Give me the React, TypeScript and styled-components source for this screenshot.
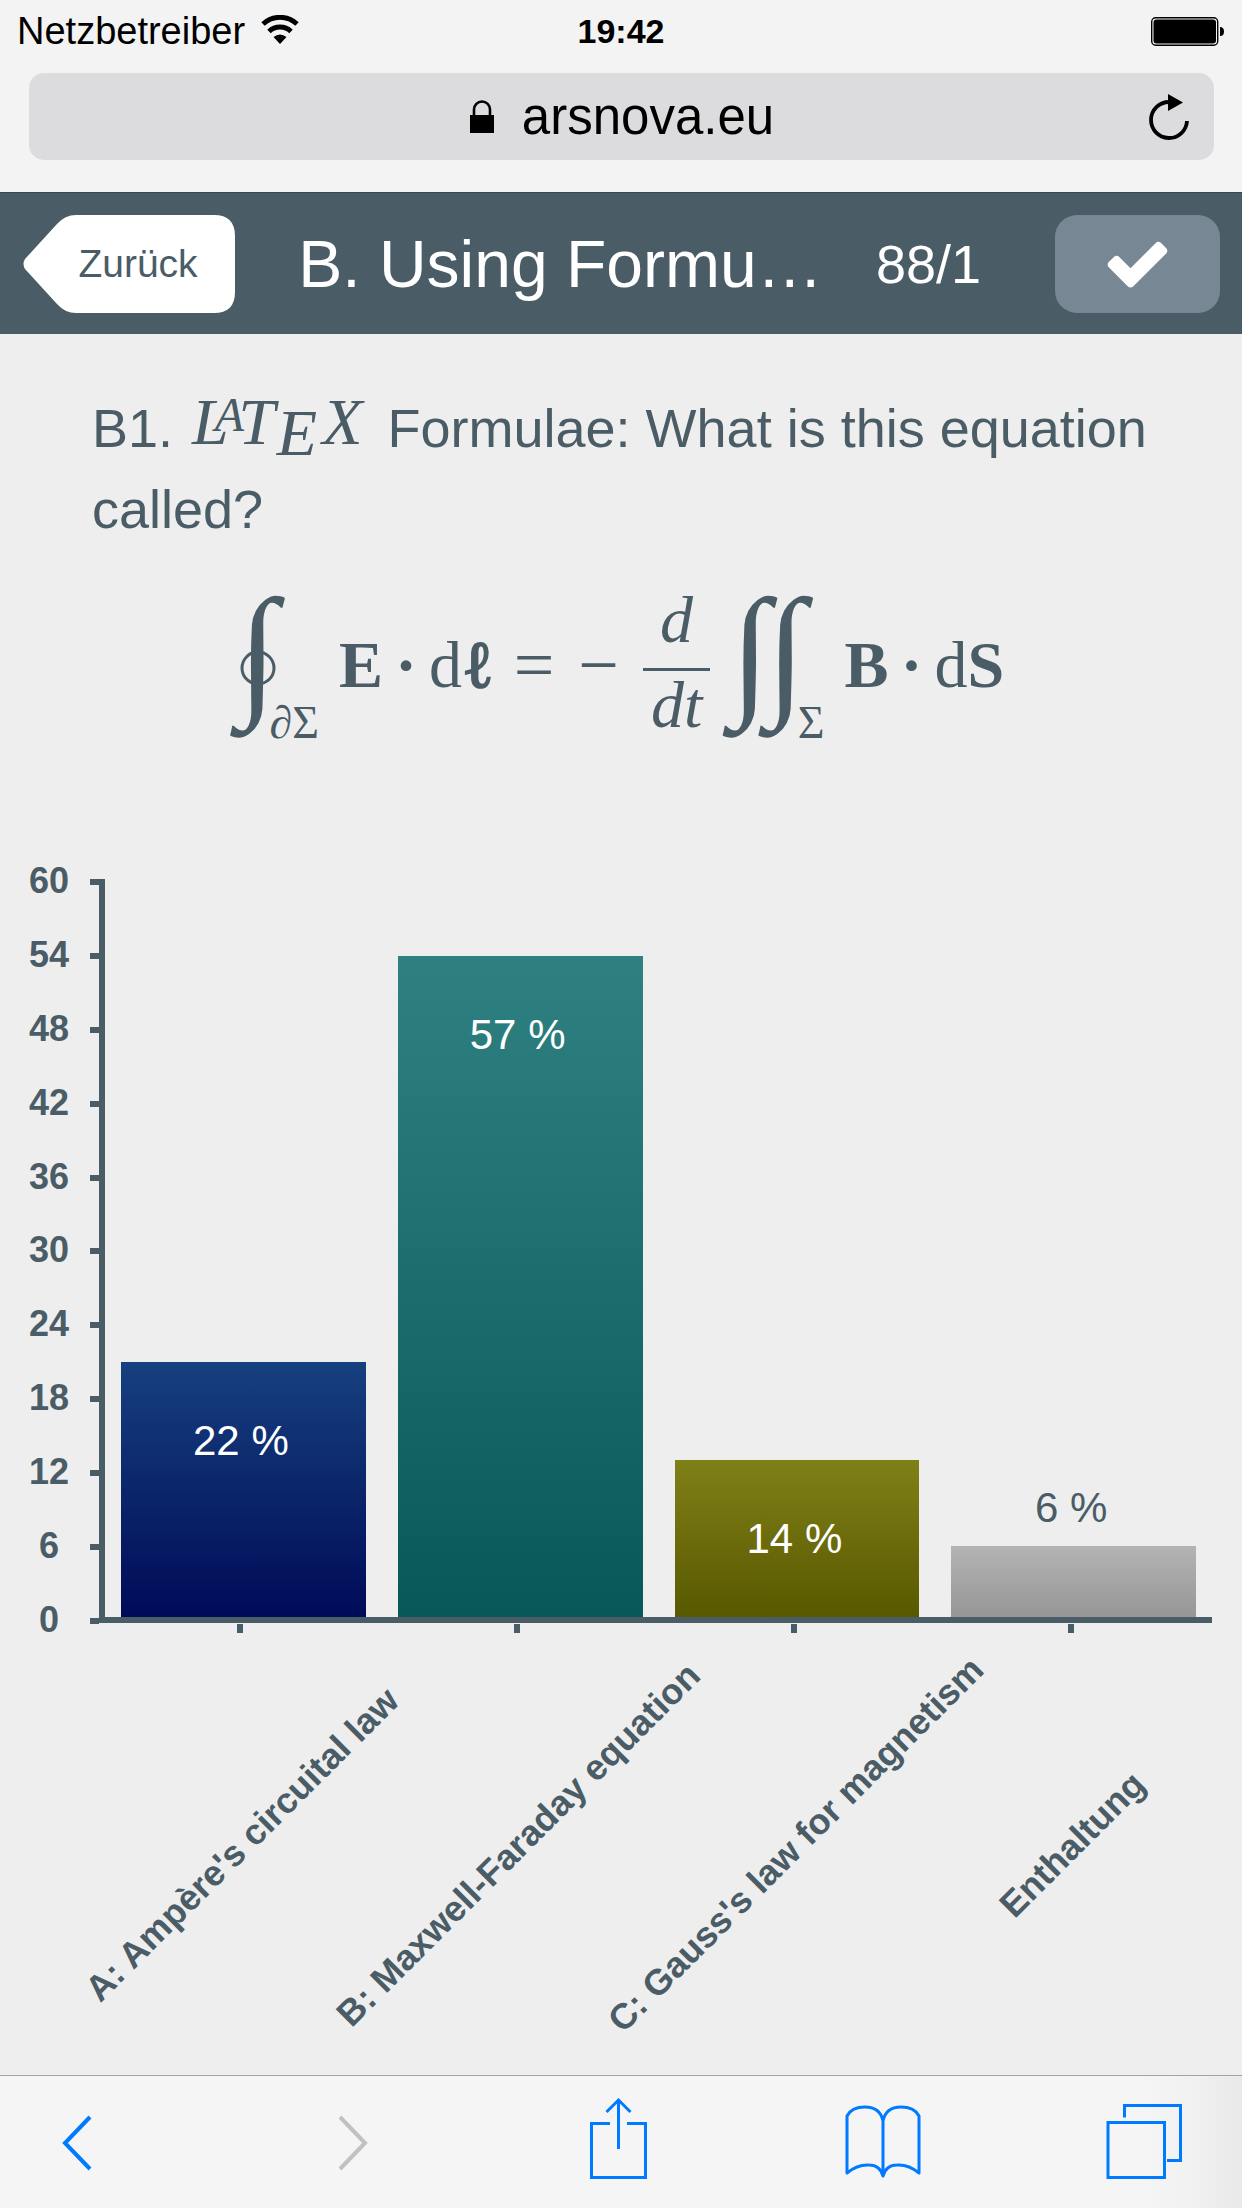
import React from "react";
import styled, { createGlobalStyle } from "styled-components";

const slate = "#4a5c66";
const blue = "#007aff";
const sans = '"Liberation Sans", Arial, sans-serif';
const serif = '"Liberation Serif", "Times New Roman", serif';

const GlobalStyle = createGlobalStyle`
  *, *::before, *::after { box-sizing: border-box; }
  body { margin: 0; background: #eeeeee; font-family: ${sans}; }
  button { border: 0; margin: 0; padding: 0; background: none; font-family: inherit; cursor: pointer; }
  svg { display: block; }
`;

const Page = styled.div`
  min-height: 100vh;
  display: flex;
  flex-direction: column;
  overflow-x: hidden;
`;

/* ---------- browser chrome ---------- */

const BrowserTop = styled.header`
  background: #f3f3f3;
  border-bottom: 1px solid #37474f;
  padding-bottom: 32px;
`;

const StatusBar = styled.div`
  display: grid;
  grid-template-columns: 1fr auto 1fr;
  align-items: center;
  height: 73px;
  padding: 0 17px 11px;
  color: #000;
`;

const Carrier = styled.div`
  display: flex;
  align-items: center;
  gap: 16px;
  font-size: 38px;
  line-height: 42px;
`;

const Clock = styled.time`
  font-size: 34px;
  line-height: 42px;
  font-weight: 700;
`;

const BatterySlot = styled.div`
  justify-self: end;
`;

const AddressBar = styled.div`
  display: grid;
  grid-template-columns: 1fr auto 1fr;
  align-items: center;
  height: 87px;
  margin: 0 28px 0 29px;
  padding: 0 25px;
  border-radius: 15px;
  background: #dcdcde;
`;

const Address = styled.a`
  grid-column: 2;
  display: flex;
  align-items: center;
  gap: 27px;
  color: #000;
  text-decoration: none;
  font-size: 51px;
  line-height: 60px;
`;

const ReloadButton = styled.button`
  justify-self: end;
`;

/* ---------- app header ---------- */

const AppBar = styled.div`
  display: flex;
  align-items: center;
  height: 141px;
  padding: 0 22px 0 23px;
  background: ${slate};
  color: #fff;
`;

const BackButton = styled.button`
  position: relative;
  width: 212px;
  height: 98px;
  padding-left: 18px;
  color: ${slate};
  font-size: 39px;
  line-height: 48px;

  svg {
    position: absolute;
    inset: 0;
  }
  span {
    position: relative;
  }
`;

const Title = styled.h1`
  flex: 1;
  min-width: 0;
  margin: 0;
  padding-left: 10px;
  overflow: hidden;
  text-overflow: ellipsis;
  white-space: nowrap;
  text-align: center;
  font-size: 66px;
  line-height: 80px;
  font-weight: 400;
`;

const Counter = styled.span`
  margin-right: 74px;
  font-size: 54px;
  line-height: 80px;
`;

const CheckButton = styled.button`
  display: flex;
  align-items: center;
  justify-content: center;
  width: 165px;
  height: 98px;
  border-radius: 22px;
  background: #778793;
`;

/* ---------- question ---------- */

const Main = styled.main`
  flex: 1;
  color: ${slate};
`;

const Question = styled.p`
  margin: 0;
  padding: 54px 92px 0;
  font-size: 54px;
  line-height: 81px;
`;

const Logo = styled.span`
  margin: 0 10px 0 4px;
  font-family: ${serif};
  font-style: italic;
  font-size: 66px;
  line-height: 0;
  vertical-align: 3px;
`;

const LogoLetter = styled.span<{ $small?: boolean; $rise?: number; $shift: number }>`
  font-size: ${(p) => (p.$small ? 48 : 66)}px;
  vertical-align: ${(p) => p.$rise ?? 0}px;
  margin-left: ${(p) => p.$shift}px;
`;

const Formula = styled.div`
  display: flex;
  align-items: center;
  justify-content: center;
  gap: 20px;
  height: 150px;
  margin: 43px 0 136px;
  font-family: ${serif};
  font-size: 66px;
  line-height: 66px;
`;

const Term = styled.span`
  padding-bottom: 6px;
`;

const Dot = styled(Term)`
  margin: 0 -8px;
  font-weight: 700;
`;

const Script = styled.span`
  -webkit-text-stroke: 2px ${slate};
`;

const Relation = styled(Term)`
  margin-right: 4px;
  font-size: 72px;
`;

const Integral = styled.span`
  display: flex;
  align-items: center;
  align-self: stretch;
`;

const IntegralSign = styled.span<{ $closed?: boolean }>`
  position: relative;
  padding-bottom: 36px;
  font-size: 145px;
  line-height: 126px;

  & + & {
    margin-left: -4px;
  }
  &::after {
    content: "";
    display: ${(p) => (p.$closed ? "block" : "none")};
    position: absolute;
    top: 50%;
    left: 50%;
    width: 35px;
    height: 35px;
    border: 3px solid ${slate};
    border-radius: 50%;
    transform: translate(-50%, -50%);
  }
`;

const Bound = styled.sub`
  align-self: flex-end;
  margin-left: -8px;
  font-size: 46px;
  line-height: 40px;
`;

const Fraction = styled.span`
  display: flex;
  flex-direction: column;
  padding-bottom: 11px;
  text-align: center;
  font-style: italic;
  line-height: 48px;
`;

const Numerator = styled.span`
  padding-bottom: 24px;
`;

const Denominator = styled.span`
  border-top: 3px solid ${slate};
  padding: 10px 8px 0;
`;

/* ---------- chart ---------- */

const Chart = styled.figure`
  display: grid;
  grid-template-columns: 70px 1fr;
  margin: 0;
  padding: 0 30px 0 29px;
`;

const Scale = styled.div`
  display: flex;
  flex-direction: column;
  justify-content: space-between;
  height: 745px;
`;

const ScaleMark = styled.div`
  display: flex;
  align-items: center;
  justify-content: space-between;
  height: 6px;
  font-size: 36px;
  line-height: 40px;
  font-weight: 700;

  span {
    width: 40px;
    padding-bottom: 2px;
    text-align: center;
  }
  &::after {
    content: "";
    width: 9px;
    height: 6px;
    background: ${slate};
  }
`;

const Plot = styled.div`
  display: grid;
  grid-template-columns: repeat(4, 1fr);
  align-items: end;
  gap: 32px;
  height: 744px;
  padding: 0 16px;
  border-left: 6px solid ${slate};
  border-bottom: 6px solid ${slate};
`;

const Bar = styled.div<{ $from: string; $to: string; $outside: boolean }>`
  display: flex;
  justify-content: center;
  padding-right: 5px;
  background: linear-gradient(${(p) => p.$from}, ${(p) => p.$to});
  color: ${(p) => (p.$outside ? slate : "#fff")};
  font-size: 42px;
  line-height: 48px;

  span {
    margin-top: ${(p) => (p.$outside ? -62 : 55)}px;
  }
`;

const Categories = styled.div`
  grid-column: 2;
  display: grid;
  grid-template-columns: repeat(4, 1fr);
  padding: 0 3px;
`;

const Category = styled.div`
  display: flex;
  flex-direction: column;
  align-items: center;
  height: 435px;
  min-width: 0;

  &::before {
    content: "";
    width: 6px;
    height: 9px;
    flex: none;
    background: ${slate};
  }
`;

const CategoryName = styled.span`
  margin: auto 0;
  padding-left: 4px;
  white-space: nowrap;
  transform: rotate(-45deg);
  font-size: 36px;
  line-height: 32px;
  font-weight: 700;
`;

/* ---------- browser toolbar ---------- */

const Toolbar = styled.nav`
  display: flex;
  align-items: flex-start;
  justify-content: space-between;
  height: 133px;
  padding: 21px 60px 0 61px;
  border-top: 1px solid #a2a4a3;
  background: linear-gradient(to right, #f5f5f5 92%, #f1f1f1 96%, #e9e9e9);
`;

const bars = [
  { name: "A: Ampère's circuital law", votes: 21, share: "22 %", from: "#16407f", to: "#000b57" },
  { name: "B: Maxwell-Faraday equation", votes: 54, share: "57 %", from: "#2f8181", to: "#095858" },
  { name: "C: Gauss's law for magnetism", votes: 13, share: "14 %", from: "#808018", to: "#585800" },
  { name: "Enthaltung", votes: 6, share: "6 %", from: "#b4b4b4", to: "#969696" },
];

const max = 60;
const marks = [60, 54, 48, 42, 36, 30, 24, 18, 12, 6, 0];

const WifiIcon = () => (
  <svg width="38" height="32" viewBox="0 0 38 32" aria-hidden="true">
    <path d="M2 9a25 25 0 0 1 34 0" fill="none" stroke="#000" strokeWidth="5" />
    <path d="M8 16.500a16 16 0 0 1 22 0" fill="none" stroke="#000" strokeWidth="5" />
    <path d="M19 29l-6.500-7q6.500-5 13 0z" fill="#000" />
  </svg>
);

const BatteryIcon = () => (
  <svg width="74" height="29" viewBox="0 0 74 29" role="img" aria-label="Akku">
    <rect x=".7" y=".7" width="66" height="27.600" rx="4" fill="none" stroke="#000" strokeWidth="1.400" />
    <rect x="2.500" y="2.500" width="62.500" height="24" rx="3" fill="#000" />
    <path d="M69 10q4 0 4 4.500t-4 4.500z" fill="#000" />
  </svg>
);

const LockIcon = () => (
  <svg width="26" height="34" viewBox="0 0 26 34" aria-hidden="true">
    <rect x="1" y="15" width="24" height="18" fill="#000" />
    <path d="M5 16V9.500a8 8 0 0 1 16 0V16" fill="none" stroke="#000" strokeWidth="2.600" />
  </svg>
);

const ReloadIcon = () => (
  <svg width="40" height="46" viewBox="0 0 40 46" aria-hidden="true">
    <path d="M20 8a18 18 0 1 0 18 19" fill="none" stroke="#000" strokeWidth="3.800" />
    <path d="M19 0l15 8.500-15 8.500z" fill="#000" />
  </svg>
);

const BackShape = () => (
  <svg width="212" height="98" viewBox="0 0 212 98" aria-hidden="true">
    <path
      d="M2 44L34 9Q42 0 53 0H191Q212 0 212 21V77Q212 98 191 98H53Q42 98 34 89L2 54Q-1 49 2 44Z"
      fill="#fff"
    />
  </svg>
);

const CheckIcon = () => (
  <svg width="69" height="69" viewBox="0 0 1792 1792" aria-hidden="true">
    <path
      fill="#fff"
      d="M1671 566q0 40-28 68l-724 724-136 136q-28 28-68 28t-68-28l-136-136-362-362q-28-28-28-68t28-68l136-136q28-28 68-28t68 28l294 295 656-657q28-28 68-28t68 28l136 136q28 28 28 68z"
    />
  </svg>
);

const ToolIcon = ({
  color = blue,
  weight = 3,
  children,
}: {
  color?: string;
  weight?: number;
  children: React.ReactNode;
}) => (
  <svg width="76" height="84" viewBox="0 0 76 84" fill="none" stroke={color} strokeWidth={weight} aria-hidden="true">
    {children}
  </svg>
);

export default function App() {
  return (
    <Page>
      <GlobalStyle />
      <BrowserTop>
        <StatusBar>
          <Carrier>
            Netzbetreiber
            <WifiIcon />
          </Carrier>
          <Clock>19:42</Clock>
          <BatterySlot>
            <BatteryIcon />
          </BatterySlot>
        </StatusBar>
        <AddressBar>
          <Address href="#">
            <LockIcon />
            arsnova.eu
          </Address>
          <ReloadButton type="button" aria-label="Neu laden">
            <ReloadIcon />
          </ReloadButton>
        </AddressBar>
      </BrowserTop>

      <AppBar>
        <BackButton type="button">
          <BackShape />
          <span>Zurück</span>
        </BackButton>
        <Title>B. Using Formu…</Title>
        <Counter>88/1</Counter>
        <CheckButton type="button" aria-label="Richtige Antwort zeigen">
          <CheckIcon />
        </CheckButton>
      </AppBar>

      <Main>
        <Question>
          B1.{" "}
          <Logo>
            L<LogoLetter $small $rise={13} $shift={-14}>A</LogoLetter>
            <LogoLetter $shift={-6}>T</LogoLetter>
            <LogoLetter $rise={-11} $shift={2}>E</LogoLetter>
            <LogoLetter $shift={5}>X</LogoLetter>
          </Logo>{" "}
          Formulae: What is this equation called?
        </Question>

        <Formula>
          <Integral>
            <IntegralSign $closed>∫</IntegralSign>
            <Bound>∂Σ</Bound>
          </Integral>
          <Term><b>E</b></Term>
          <Dot>·</Dot>
          <Term>d<Script>ℓ</Script></Term>
          <Relation>=</Relation>
          <Relation>−</Relation>
          <Fraction>
            <Numerator>d</Numerator>
            <Denominator>dt</Denominator>
          </Fraction>
          <Integral>
            <IntegralSign>∫</IntegralSign>
            <IntegralSign>∫</IntegralSign>
            <Bound>Σ</Bound>
          </Integral>
          <Term><b>B</b></Term>
          <Dot>·</Dot>
          <Term>d<b>S</b></Term>
        </Formula>

        <Chart>
          <Scale>
            {marks.map((m) => (
              <ScaleMark key={m}>
                <span>{m}</span>
              </ScaleMark>
            ))}
          </Scale>
          <Plot>
            {bars.map((b) => (
              <Bar
                key={b.name}
                $from={b.from}
                $to={b.to}
                $outside={b.votes < 10}
                style={{ height: `calc(${(b.votes / max) * 100}% - 3px)` }}
              >
                <span>{b.share}</span>
              </Bar>
            ))}
          </Plot>
          <Categories>
            {bars.map((b) => (
              <Category key={b.name}>
                <CategoryName>{b.name}</CategoryName>
              </Category>
            ))}
          </Categories>
        </Chart>
      </Main>

      <Toolbar>
        <button type="button" aria-label="Zurück">
          <ToolIcon weight={4}>
            <path d="M29 20L4 46l25 26" />
          </ToolIcon>
        </button>
        <button type="button" aria-label="Vorwärts">
          <ToolIcon weight={4} color="#c1c1c1">
            <path d="M18 20l25 26-25 26" />
          </ToolIcon>
        </button>
        <button type="button" aria-label="Teilen">
          <ToolIcon>
            <path d="M26 26.500H7.500V80.500H61.500V26.500H43M34.500 52V3M22.500 15L34.500 3l12 12" />
          </ToolIcon>
        </button>
        <button type="button" aria-label="Lesezeichen">
          <ToolIcon>
            <path
              strokeLinejoin="round"
              d="M38 76V24C36 14 29 10 20 10C12 10 5 13 2 19V76C8 71 16 67.500 24 68C31 68 36 72 38 79C40 72 44 68 52 68C60 67.500 68 71 74 76V19C71 13 64 10 56 10C47 10 40 14 38 24"
            />
          </ToolIcon>
        </button>
        <button type="button" aria-label="Tabs">
          <ToolIcon>
            <path d="M2 25.500H58.500V80.500H2ZM18.500 20.500V8.500H74.500V63.500H61" />
          </ToolIcon>
        </button>
      </Toolbar>
    </Page>
  );
}
